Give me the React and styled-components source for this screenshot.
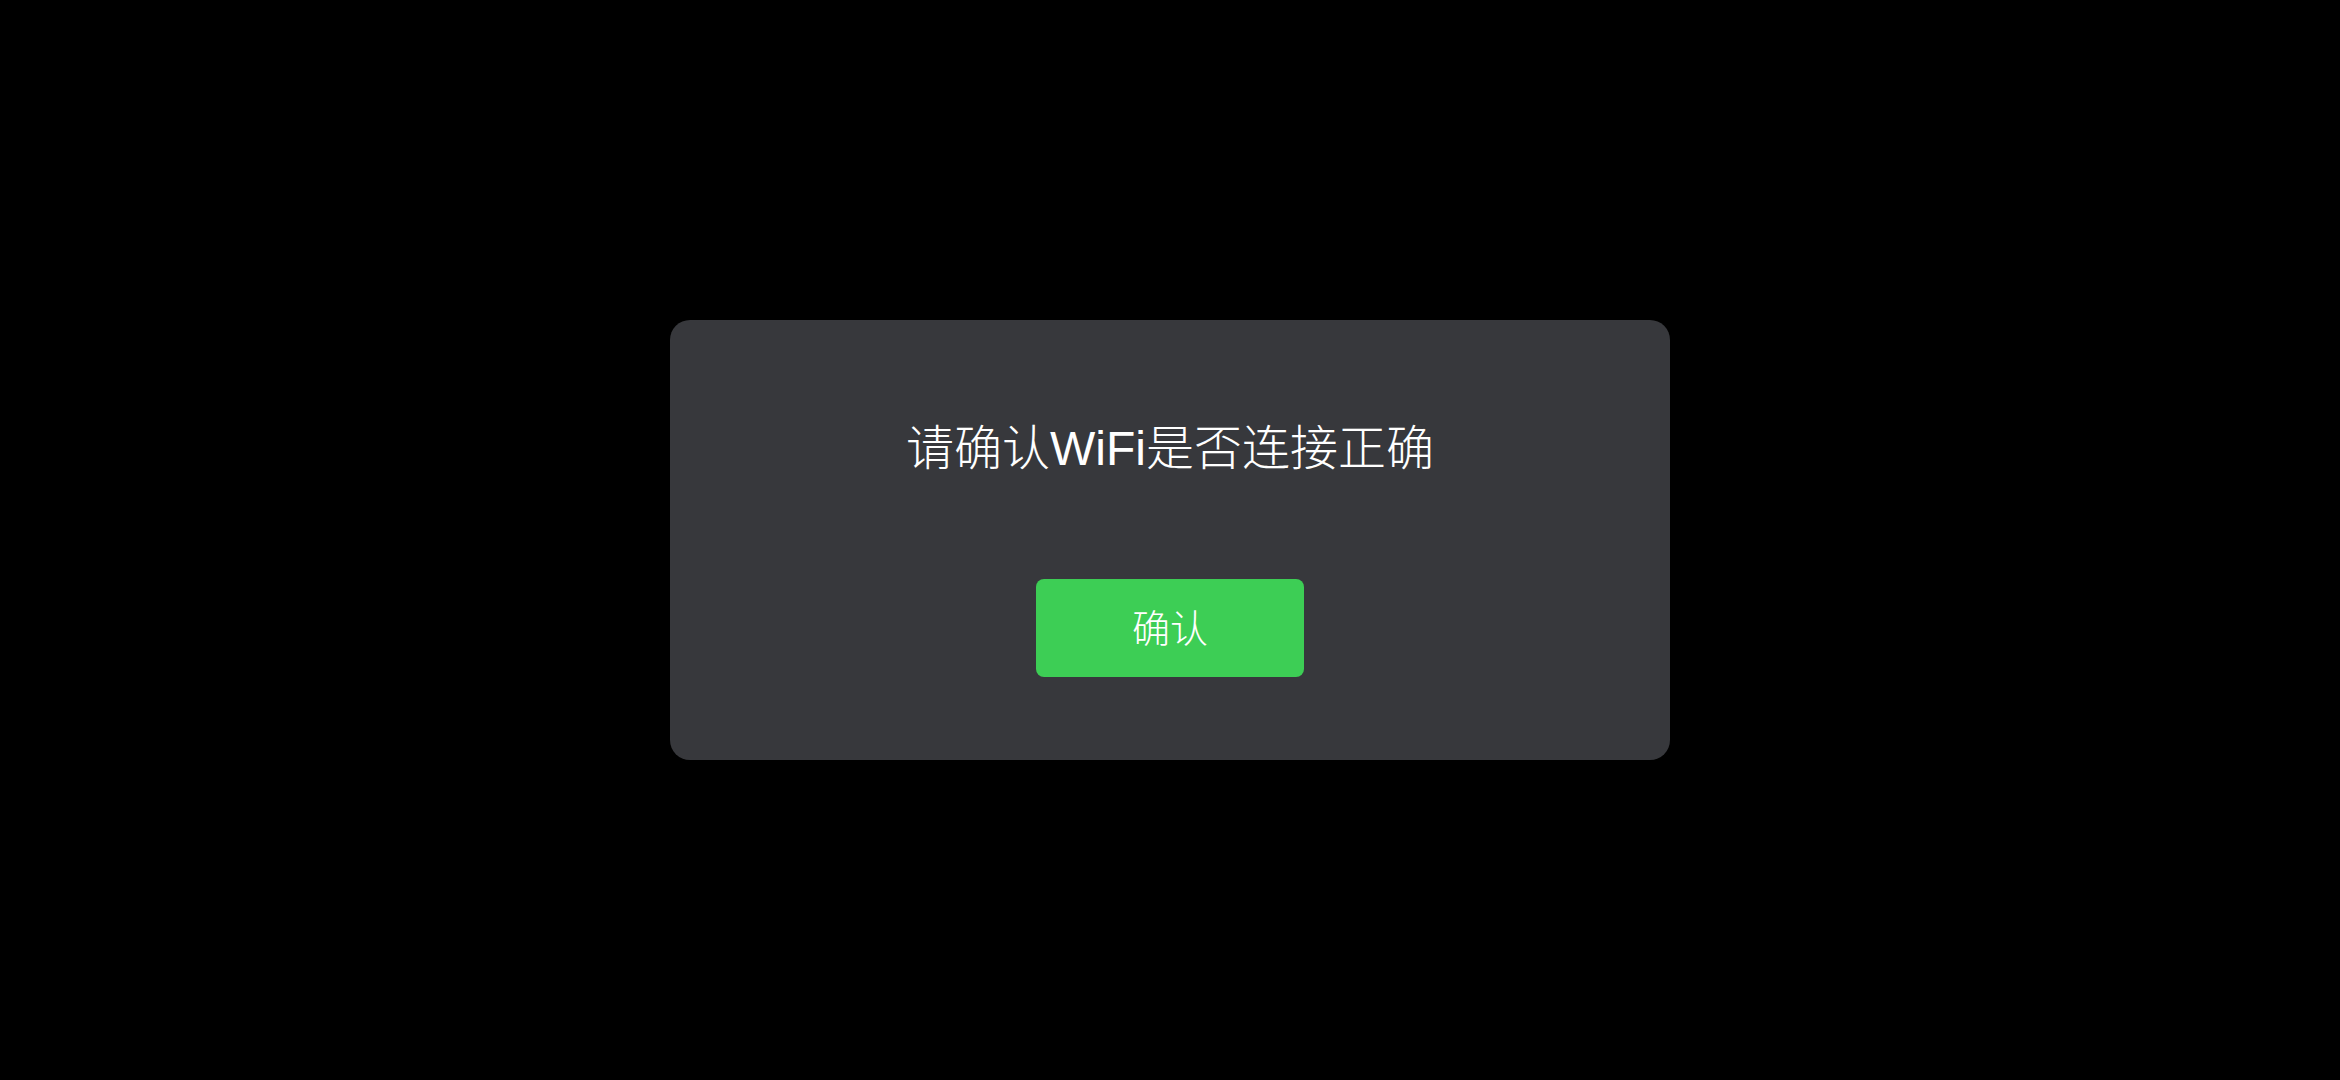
import React from 'react'
import styled, { createGlobalStyle } from 'styled-components'

const GlobalStyle = createGlobalStyle`
  html, body {
    margin: 0;
    padding: 0;
    background-color: #000;
  }
  body {
    font-family: "Liberation Sans", "Noto Sans CJK SC", sans-serif;
  }
`

const App = () => {
  return (
    <React.Fragment>
      <GlobalStyle />
      <Screen>
        <Dialog>
          <Title>请确认WiFi是否连接正确</Title>
          <ConfirmButton>确认</ConfirmButton>
        </Dialog>
      </Screen>
    </React.Fragment>
  )
}

const Screen = styled.div`
  width: 100vw;
  height: 100vh;
  background-color: #000;
  display: flex;
  justify-content: center;
  align-items: center;
`

const Dialog = styled.div`
  width: 1000px;
  height: 440px;
  box-sizing: border-box;
  padding: 97px 0px 83px 0px;
  background-color: #37383c;
  border-radius: 20px;
  display: flex;
  flex-direction: column;
  align-items: center;
`

const Title = styled.div`
  font-size: 48px;
  font-weight: 300;
  line-height: 64px;
  height: 64px;
  color: #fff;
  white-space: nowrap;
`

const ConfirmButton = styled.button`
  margin-top: 98px;
  width: 268px;
  height: 98px;
  border: none;
  border-radius: 8px;
  background-color: #3dce55;
  color: #fff;
  font-family: "Liberation Sans", "Noto Sans CJK SC", sans-serif;
  font-size: 38px;
  font-weight: 300;
  padding: 0 0 6px 0;
  cursor: pointer;
`

export default App
